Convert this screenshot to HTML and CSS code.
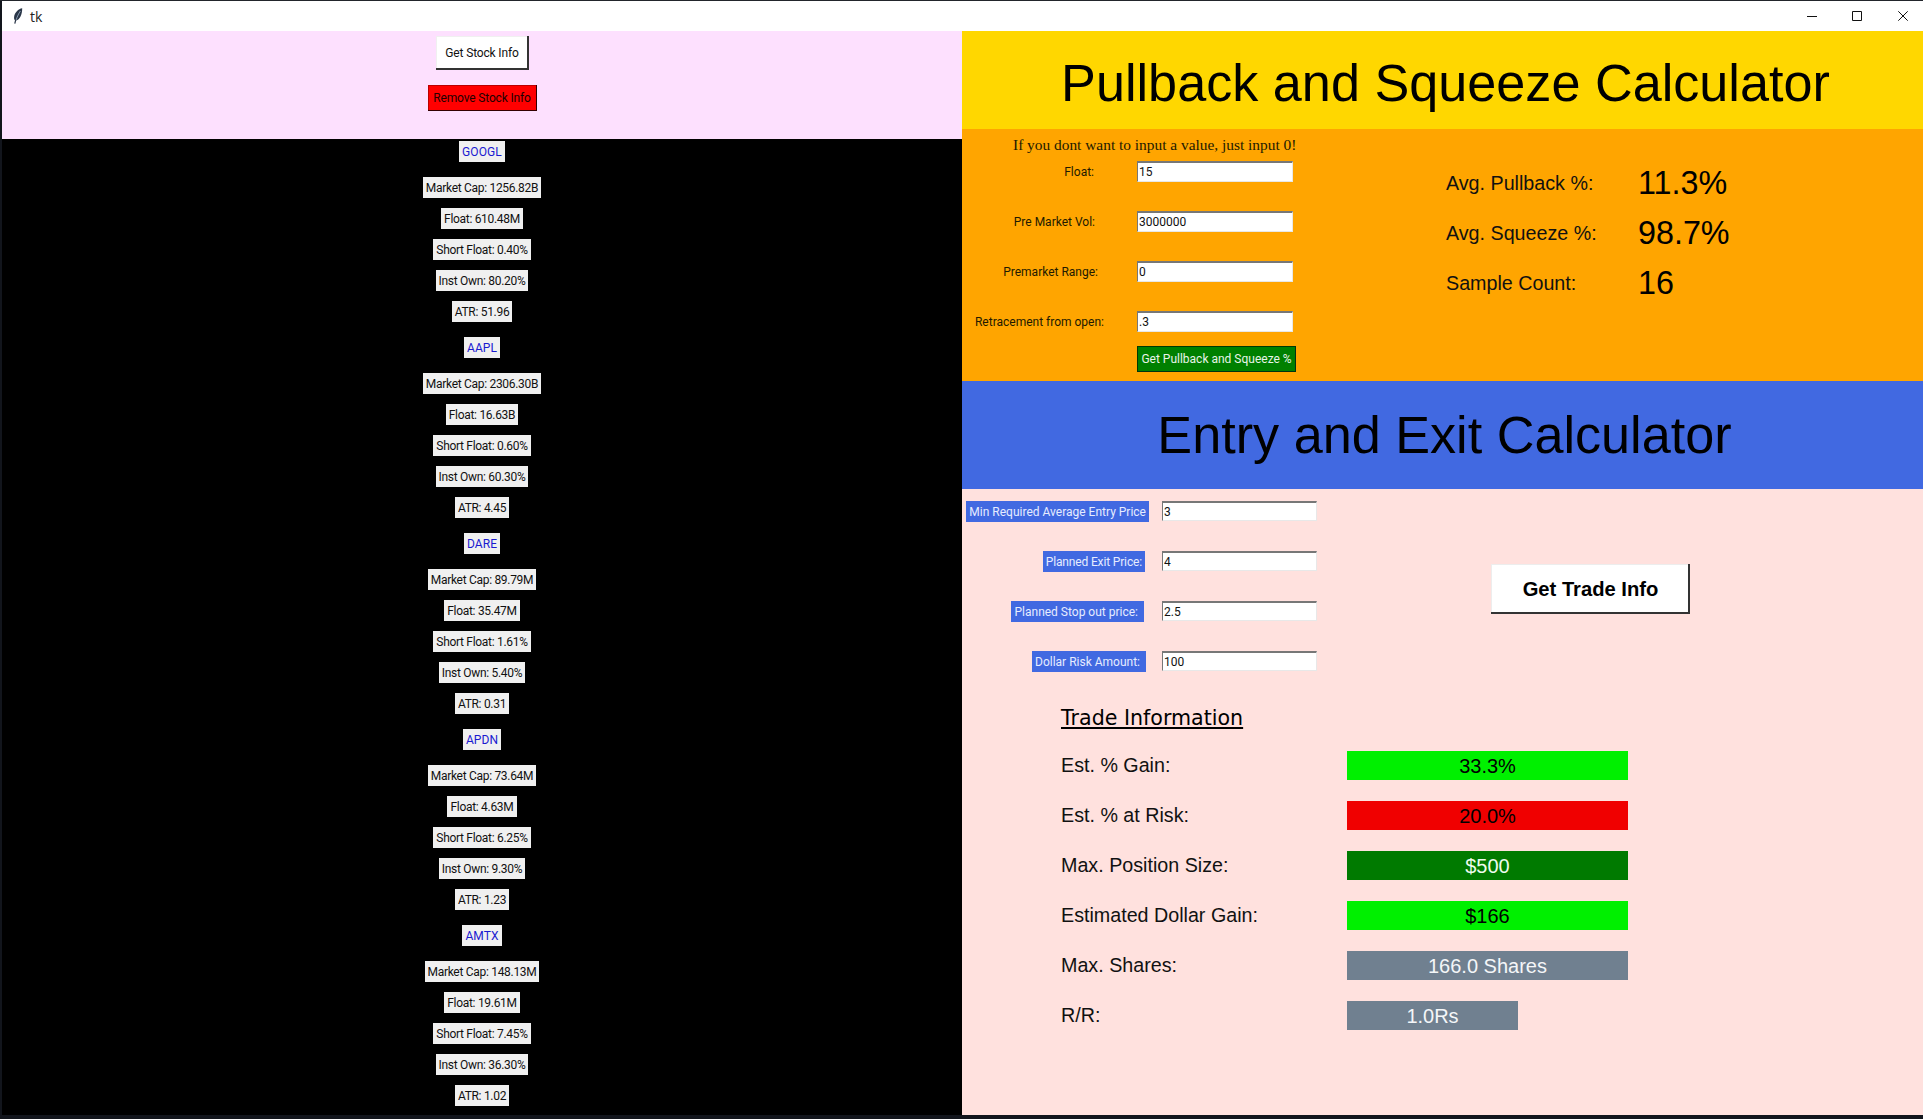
FILE: index.html
```html
<!DOCTYPE html>
<html lang="en">
<head>
    <meta charset="UTF-8">
    <meta name="viewport" content="width=device-width, initial-scale=1.0">
    <title>tk</title>
    <link rel="stylesheet" href="styles.css">
</head>
<body>

<div class="titlebar">
  <svg class="feather" width="10" height="16" viewBox="0 0 10 16">
    <path d="M9.2 .3C5.4 .9 1.6 4.6 1.1 9 .9 10.6 1.3 11.8 2 12.3L1.2 15.6 2.4 15.8 3.2 12.6C6.6 11.8 9.3 6.6 9.2 .3Z" fill="#2a3648"/>
    <path d="M7.4 3C5.8 5.4 4.2 8.6 3.2 11.8" stroke="#9fb2c8" stroke-width=".8" fill="none"/>
  </svg>
  <span class="titlebar-name">tk</span>
  <div class="controls">
    <svg width="10" height="10" viewBox="0 0 10 10"><path d="M0 5.5H10" stroke="#111" fill="none"/></svg>
    <svg width="10" height="10" viewBox="0 0 10 10"><path d="M.5 .5H9.5V9.5H.5Z" stroke="#111" fill="none"/></svg>
    <svg class="control-close" width="10" height="10" viewBox="0 0 10 10"><path d="M.3 .3L9.7 9.7M9.7 .3L.3 9.7" stroke="#111" fill="none"/></svg>
  </div>
</div>

<div class="main">
  <div class="left">
    <div class="stock-actions">
      <button class="btn btn-get">Get Stock Info</button>
      <button class="btn btn-remove">Remove Stock Info</button>
    </div>
    <div class="stocks">
      <div class="stock">
        <span class="tag ticker">GOOGL</span>
        <span class="tag">Market Cap: 1256.82B</span>
        <span class="tag">Float: 610.48M</span>
        <span class="tag">Short Float: 0.40%</span>
        <span class="tag">Inst Own: 80.20%</span>
        <span class="tag">ATR: 51.96</span>
      </div>
      <div class="stock">
        <span class="tag ticker">AAPL</span>
        <span class="tag">Market Cap: 2306.30B</span>
        <span class="tag">Float: 16.63B</span>
        <span class="tag">Short Float: 0.60%</span>
        <span class="tag">Inst Own: 60.30%</span>
        <span class="tag">ATR: 4.45</span>
      </div>
      <div class="stock">
        <span class="tag ticker">DARE</span>
        <span class="tag">Market Cap: 89.79M</span>
        <span class="tag">Float: 35.47M</span>
        <span class="tag">Short Float: 1.61%</span>
        <span class="tag">Inst Own: 5.40%</span>
        <span class="tag">ATR: 0.31</span>
      </div>
      <div class="stock">
        <span class="tag ticker">APDN</span>
        <span class="tag">Market Cap: 73.64M</span>
        <span class="tag">Float: 4.63M</span>
        <span class="tag">Short Float: 6.25%</span>
        <span class="tag">Inst Own: 9.30%</span>
        <span class="tag">ATR: 1.23</span>
      </div>
      <div class="stock">
        <span class="tag ticker">AMTX</span>
        <span class="tag">Market Cap: 148.13M</span>
        <span class="tag">Float: 19.61M</span>
        <span class="tag">Short Float: 7.45%</span>
        <span class="tag">Inst Own: 36.30%</span>
        <span class="tag">ATR: 1.02</span>
      </div>
    </div>
  </div>

  <div class="right">
    <div class="heading heading-pullback">Pullback and Squeeze Calculator</div>

    <div class="pullback">
      <div class="pullback-form">
        <div class="note">If you dont want to input a value, just input 0!</div>
        <div class="field">
          <label class="field-label label-float">Float:</label>
          <input class="entry" value="15">
        </div>
        <div class="field">
          <label class="field-label label-vol">Pre Market Vol:</label>
          <input class="entry" value="3000000">
        </div>
        <div class="field">
          <label class="field-label label-range">Premarket Range:</label>
          <input class="entry" value="0">
        </div>
        <div class="field">
          <label class="field-label">Retracement from open:</label>
          <input class="entry" value=".3">
        </div>
        <button class="btn btn-pullback">Get Pullback and Squeeze %</button>
      </div>
      <div class="results">
        <div class="result"><span class="result-name">Avg. Pullback %:</span><span class="result-value">11.3%</span></div>
        <div class="result"><span class="result-name">Avg. Squeeze %:</span><span class="result-value">98.7%</span></div>
        <div class="result"><span class="result-name">Sample Count:</span><span class="result-value">16</span></div>
      </div>
    </div>

    <div class="heading heading-entry">Entry and Exit Calculator</div>

    <div class="trade">
      <div class="trade-top">
        <div class="trade-form">
          <div class="trade-field">
            <label class="trade-label">Min Required Average Entry Price</label>
            <input class="entry" value="3">
          </div>
          <div class="trade-field">
            <label class="trade-label label-exit">Planned Exit Price:</label>
            <input class="entry" value="4">
          </div>
          <div class="trade-field">
            <label class="trade-label label-stop">Planned Stop out price:</label>
            <input class="entry" value="2.5">
          </div>
          <div class="trade-field">
            <label class="trade-label label-risk">Dollar Risk Amount:</label>
            <input class="entry" value="100">
          </div>
        </div>
        <button class="btn btn-trade">Get Trade Info</button>
      </div>

      <div class="info-title">Trade Information</div>
      <div class="info-row"><span class="info-name">Est. % Gain:</span><span class="info-bar bar-lime">33.3%</span></div>
      <div class="info-row"><span class="info-name">Est. % at Risk:</span><span class="info-bar bar-red">20.0%</span></div>
      <div class="info-row"><span class="info-name">Max. Position Size:</span><span class="info-bar bar-green">$500</span></div>
      <div class="info-row"><span class="info-name">Estimated Dollar Gain:</span><span class="info-bar bar-lime">$166</span></div>
      <div class="info-row"><span class="info-name">Max. Shares:</span><span class="info-bar bar-slate">166.0 Shares</span></div>
      <div class="info-row"><span class="info-name">R/R:</span><span class="info-bar bar-slate bar-short">1.0Rs</span></div>
    </div>
  </div>
</div>

<div class="taskbar-edge"></div>

</body>
</html>
```

FILE: styles.css
```css
html, body {
    margin: 0;
    padding: 0;
    height: 1119px;
    overflow: hidden;
}
body {
    display: flex;
    flex-direction: column;
    background-color: #12151c;
    border-top: 1px solid #22252b;
    box-sizing: border-box;
    font-family: "Liberation Sans", Arial, sans-serif;
    color: #000;
}

/* title bar */
.titlebar {
    height: 30px;
    margin-left: 2px;
    background-color: #fff;
    display: flex;
    align-items: center;
    flex-shrink: 0;
}
.feather {
    margin-left: 11px;
}
.titlebar-name {
    margin-left: 7px;
    font-family: "Open Sans", sans-serif;
    font-size: 14px;
    color: #222;
}
.controls {
    margin-left: auto;
    margin-right: 15px;
    display: flex;
    gap: 35px;
}
.control-close {
    margin-left: 1px;
}

.main {
    display: flex;
    height: 1084px;
    margin-left: 2px;
}

/* left column */
.left {
    width: 960px;
    display: flex;
    flex-direction: column;
    background-color: #000;
}
.stock-actions {
    height: 108px;
    box-sizing: border-box;
    padding-top: 5px;
    background-color: #fde0fe;
    display: flex;
    flex-direction: column;
    align-items: center;
    gap: 15px;
}
.btn {
    font-family: Roboto, sans-serif;
    border: 0;
    padding: 0;
    white-space: nowrap;
    box-shadow: inset -1px -1px 0 #222, inset 1px 1px 0 #f4f4f4;
}
.btn-get {
    width: 93px;
    height: 34px;
    background-color: #fff;
    font-size: 12px;
    letter-spacing: -.15px;
    color: #111;
    box-shadow: inset -2px -2px 0 #333, inset 1px 1px 0 #f0f0f0;
}
.btn-remove {
    width: 109px;
    height: 26px;
    background-color: #f00;
    font-size: 12px;
    letter-spacing: -.15px;
    color: #200;
    box-shadow: inset -1px -1px 0 #300, inset 1px 1px 0 #b00, inset 0 0 0 1px #900;
}
.stocks {
    padding-top: 2px;
    display: flex;
    flex-direction: column;
    gap: 15px;
}
.stock {
    display: flex;
    flex-direction: column;
    align-items: center;
    gap: 10px;
}
.tag {
    height: 21px;
    line-height: 23px;
    padding: 0 3px;
    background-color: #f0f0f0;
    font-family: Roboto, sans-serif;
    font-size: 12px;
    letter-spacing: -.3px;
    white-space: nowrap;
    color: #111;
}
.ticker {
    margin-bottom: 5px;
    letter-spacing: .1px;
    color: #1a1ad0;
}

/* right column */
.right {
    width: 961px;
    display: flex;
    flex-direction: column;
}
.heading {
    text-align: center;
    box-sizing: border-box;
    font-size: 52.2px;
}
.heading-pullback {
    height: 98px;
    padding-left: 6px;
    line-height: 105px;
    background-color: #ffd700;
}
.heading-entry {
    height: 108px;
    padding-left: 4px;
    line-height: 108px;
    background-color: #4169e1;
}

/* pullback section */
.pullback {
    height: 252px;
    background-color: #ffa500;
    display: flex;
}
.pullback-form {
    width: 484px;
    box-sizing: border-box;
    padding-top: 5px;
}
.note {
    margin-left: 51px;
    font-family: "Liberation Serif", serif;
    font-size: 15.4px;
    height: 27px;
    line-height: 22px;
    color: #221a00;
}
.field {
    display: flex;
    align-items: center;
    height: 21px;
    margin-bottom: 29px;
}
.field-label {
    width: 142px;
    box-sizing: border-box;
    text-align: right;
    font-family: Roboto, sans-serif;
    font-size: 12px;
    margin-right: 33px;
    white-space: nowrap;
    color: #221a00;
}
.label-float { padding-right: 10px; }
.label-vol { padding-right: 9px; }
.label-range { padding-right: 6px; }
.entry {
    box-sizing: border-box;
    width: 156px;
    height: 21px;
    padding: 0 0 0 1px;
    margin: 0;
    border: 1px solid;
    border-color: #777 #e8e8e8 #e8e8e8 #777;
    border-top-width: 2px;
    background-color: #fff;
    font-family: Roboto, sans-serif;
    font-size: 12px;
    color: #111;
    outline: none;
}
.btn-pullback {
    display: block;
    margin-left: 175px;
    margin-top: -15px;
    width: 159px;
    height: 26px;
    background-color: #008000;
    color: #e8f4e8;
    font-size: 12px;
    box-shadow: inset -1px -1px 0 #031, inset 1px 1px 0 #003a00;
}
.results {
    padding-top: 29px;
}
.result {
    display: flex;
    align-items: center;
    height: 50px;
}
.result-name {
    width: 192px;
    font-size: 19.7px;
    color: #111;
}
.result-value {
    font-size: 32.3px;
}

/* trade section */
.trade {
    height: 626px;
    box-sizing: border-box;
    padding-top: 12px;
    background-color: #ffe1de;
}
.trade-top {
    display: flex;
    height: 203px;
}
.trade-form {
    width: 355px;
}
.trade-field {
    display: grid;
    grid-template-columns: 187px 155px;
    column-gap: 13px;
    align-items: start;
    margin-bottom: 29px;
}
.trade-label {
    justify-self: end;
    height: 21px;
    line-height: 23px;
    padding: 0 3px;
    background-color: #4169e1;
    color: #e6ecff;
    font-family: Roboto, sans-serif;
    font-size: 12px;
    white-space: nowrap;
}
.label-exit { margin-right: 4px; letter-spacing: -.15px; }
.label-stop { margin-right: 5px; padding-right: 6px; }
.label-risk { margin-right: 3px; padding-right: 6px; }
.trade-field .entry {
    width: 155px;
    height: 20px;
}
.btn-trade {
    margin-left: 174px;
    margin-top: 63px;
    width: 199px;
    height: 50px;
    background-color: #fff;
    font-family: "Liberation Sans", Arial, sans-serif;
    font-weight: bold;
    font-size: 20.2px;
    box-shadow: inset -2px -2px 0 #333, inset 1px 1px 0 #ededed;
}
.info-title {
    margin-left: 99px;
    font-family: "DejaVu Sans", sans-serif;
    font-size: 20.6px;
    text-decoration: underline;
    line-height: 28px;
    height: 47px;
}
.info-row {
    display: flex;
    align-items: center;
    height: 29px;
    margin-bottom: 21px;
    margin-left: 99px;
}
.info-name {
    width: 286px;
    line-height: 31px;
    font-size: 19.7px;
    color: #111;
}
.info-bar {
    width: 281px;
    height: 29px;
    line-height: 31px;
    text-align: center;
    font-size: 20px;
}
.bar-short { width: 171px; }
.bar-lime { background-color: #00f000; }
.bar-red { background-color: #f00000; }
.bar-green { background-color: #007a00; color: #eefcee; }
.bar-slate { background-color: #708090; color: #f4f6f8; }

.taskbar-edge {
    flex: 1;
    background-color: #12151c;
}
```
